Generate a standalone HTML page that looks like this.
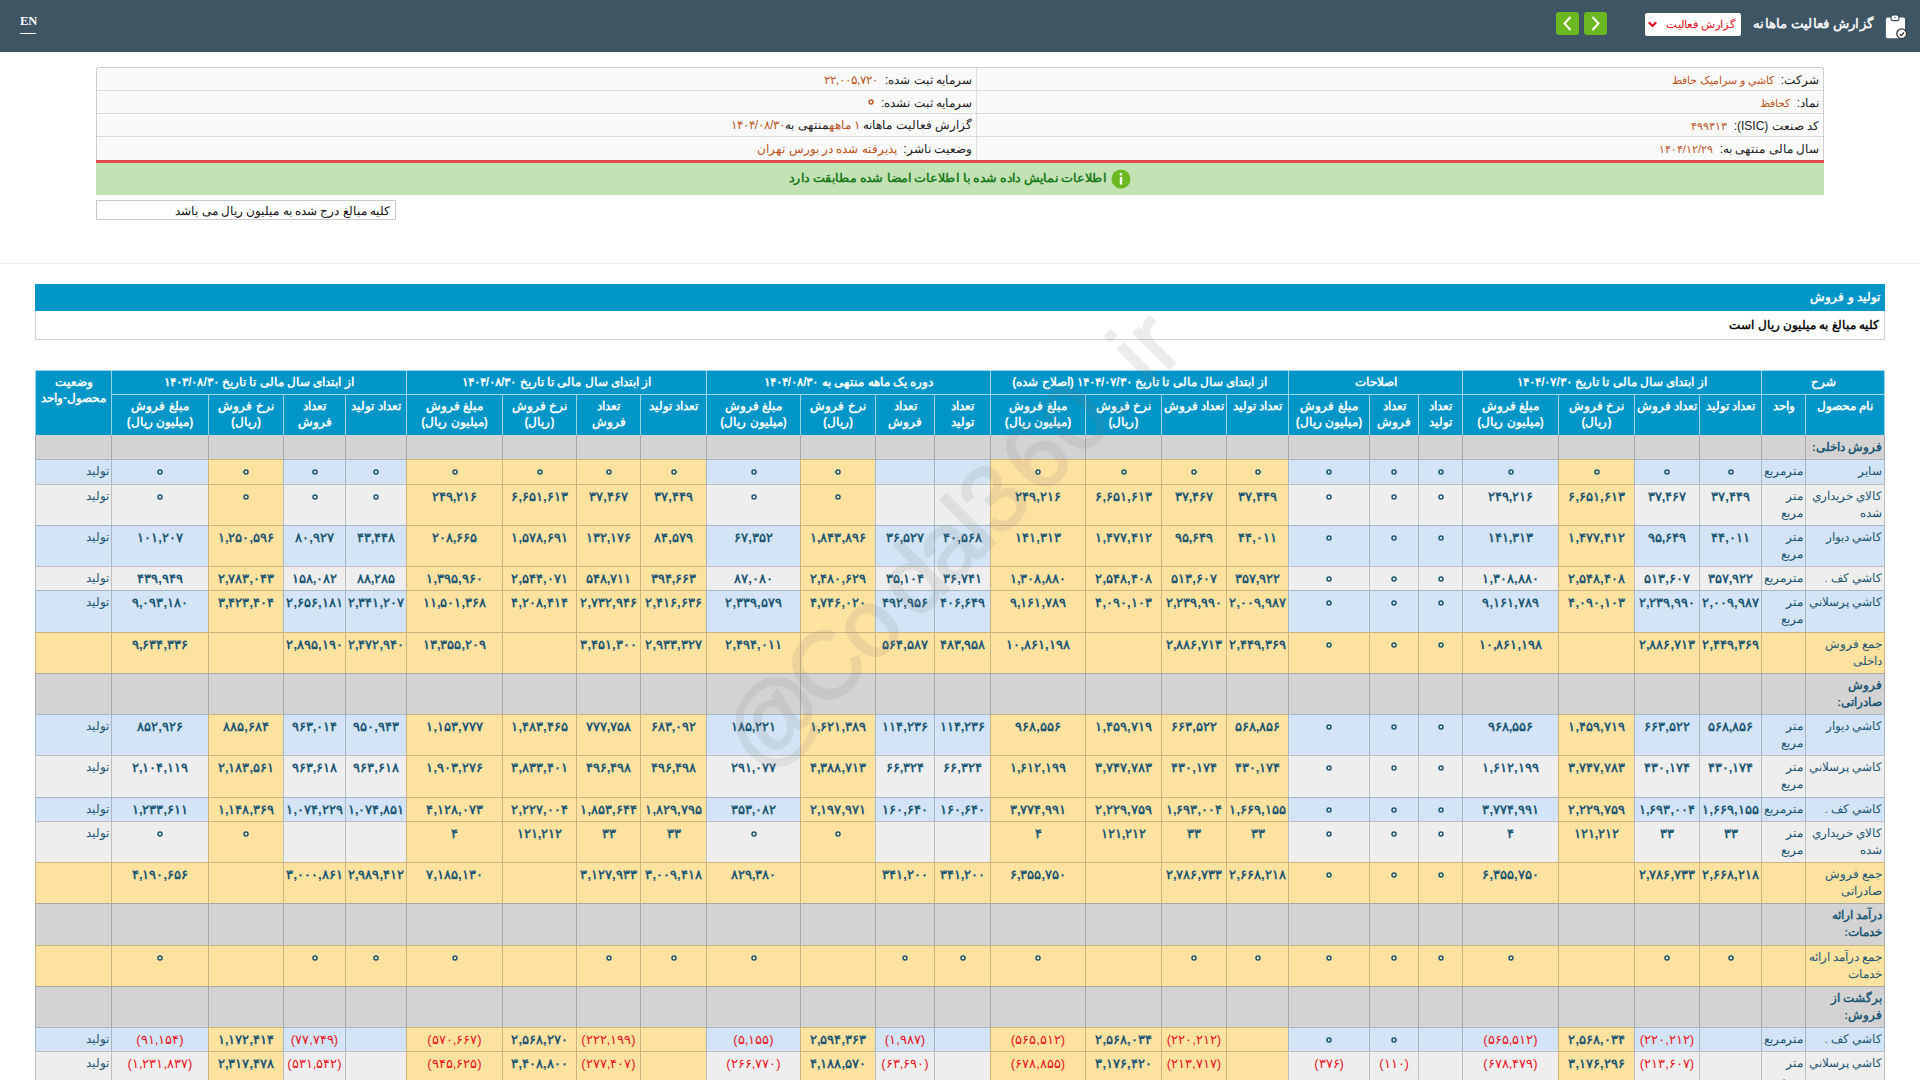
<!DOCTYPE html>
<html lang="fa"><head><meta charset="utf-8"><title>گزارش فعالیت ماهانه</title>
<style>
*{box-sizing:border-box;margin:0;padding:0}
html,body{width:1920px;height:1080px;overflow:hidden;background:#fff}
body{position:relative;font-family:"Liberation Sans",sans-serif;font-size:12px;color:#222}
.a{position:absolute}
.c{position:absolute;border-left:1px solid rgba(0,0,0,0.2);border-top:1px solid rgba(0,0,0,0.2);color:#1d5673;text-align:center;padding-top:3px;line-height:17px;white-space:nowrap;overflow:hidden;font-size:13px;font-weight:bold}
.rt{text-align:right;padding-right:2px;font-size:11.5px;font-weight:normal}
.c.b{font-weight:bold}
.h{position:absolute;border-left:1px solid #9fd3ea;border-top:1px solid #9fd3ea;color:#fff;text-align:center;font-weight:bold;line-height:16px;white-space:nowrap;overflow:hidden;font-size:12px;background:#0096c8}
.red{color:#e8141e;font-weight:normal !important}
.b{font-weight:bold}
</style></head><body dir="rtl">

<div class="a" style="left:0;top:0;width:1920px;height:52px;background:#3e5563"></div>
<div class="a" dir="ltr" style="left:20px;top:13px;width:16px;height:21px;font-family:'Liberation Serif',serif;font-weight:bold;font-size:12.5px;color:#fff;line-height:17px;border-bottom:1px solid #fff">EN</div>
<svg class="a" style="left:1880px;top:10px" width="32" height="32" viewBox="0 0 32 32">
<rect x="5.9" y="7.6" width="19.1" height="20.7" rx="1.6" fill="#fff"/>
<rect x="11" y="5" width="8" height="5.6" rx="2.2" fill="#fff" stroke="#3a4a55" stroke-width="1.1"/>
<path d="M14.2 8 L15 6.6 L15.8 8 z" fill="#333"/>
<circle cx="21.7" cy="23.7" r="4.9" fill="#fff" stroke="#333" stroke-width="1.3"/>
<path d="M19.9 24.2 L21.2 25.5 L24 22.6" fill="none" stroke="#333" stroke-width="1.4"/>
</svg>
<div class="a" style="left:1700px;top:12px;width:173px;height:24px;text-align:right;color:#f4f6f8;font-weight:bold;font-size:13px;line-height:24px;white-space:nowrap;transform:scaleX(1.03);transform-origin:right center">گزارش فعالیت ماهانه</div>
<div class="a" style="left:1645px;top:13px;width:96px;height:23px;background:#fff;border-radius:2px"></div>
<div class="a" style="left:1662px;top:13px;width:73px;height:23px;text-align:right;color:#e0141e;font-size:11px;line-height:22px;white-space:nowrap;transform:scaleX(1.06);transform-origin:right center">گزارش فعالیت</div>
<svg class="a" style="left:1647px;top:20px" width="11" height="9" viewBox="0 0 11 9"><path d="M1.8 2.2 L5.5 6 L9.2 2.2" fill="none" stroke="#e0141e" stroke-width="2.2"/></svg>
<div class="a" style="left:1556px;top:12px;width:23px;height:23px;background:#6cb823;border-radius:3px"></div>
<svg class="a" style="left:1556px;top:12px" width="23" height="23" viewBox="0 0 23 23"><path d="M14.5 5 L8.5 11.5 L14.5 18" fill="none" stroke="#fff" stroke-width="2"/></svg>
<div class="a" style="left:1584px;top:12px;width:23px;height:23px;background:#6cb823;border-radius:3px"></div>
<svg class="a" style="left:1584px;top:12px" width="23" height="23" viewBox="0 0 23 23"><path d="M8.5 5 L14.5 11.5 L8.5 18" fill="none" stroke="#fff" stroke-width="2"/></svg>
<div class="a" style="left:96px;top:67px;width:1728px;height:96px;background:#f9f9f9;border:1px solid #cfcfcf;border-bottom:none;border-radius:3px 3px 0 0"></div>
<div class="a" style="left:97px;top:90px;width:1726px;height:1px;background:#dcdcdc"></div>
<div class="a" style="left:97px;top:113px;width:1726px;height:1px;background:#dcdcdc"></div>
<div class="a" style="left:97px;top:136px;width:1726px;height:1px;background:#dcdcdc"></div>
<div class="a" style="left:976px;top:68px;width:1px;height:92px;background:#dcdcdc"></div>
<div class="a" style="left:96px;top:160px;width:1728px;height:3px;background:#e24c4c"></div>
<div class="a" style="left:96px;top:163px;width:1728px;height:32px;background:#c3e3b5"></div>
<div class="a" style="left:990px;top:67px;width:829px;height:23px;text-align:right;font-size:12px;line-height:26px;color:#222">شرکت:&nbsp; <span style="color:#b9561e;font-size:11px">کاشي و سرامیک حافظ</span></div>
<div class="a" style="left:990px;top:90px;width:829px;height:23px;text-align:right;font-size:12px;line-height:26px;color:#222">نماد:&nbsp; <span style="color:#b9561e;font-size:11px">کحافظ</span></div>
<div class="a" style="left:990px;top:113px;width:829px;height:23px;text-align:right;font-size:12px;line-height:26px;color:#222">کد صنعت (ISIC):&nbsp; <span style="color:#b9561e;font-size:11px">۴۹۹۳۱۳</span></div>
<div class="a" style="left:990px;top:136px;width:829px;height:23px;text-align:right;font-size:12px;line-height:26px;color:#222">سال مالی منتهی به:&nbsp; <span style="color:#b9561e;font-size:11px">۱۴۰۴/۱۲/۲۹</span></div>
<div class="a" style="left:110px;top:67px;width:862px;height:23px;text-align:right;font-size:12px;line-height:26px;color:#222">سرمایه ثبت شده:&nbsp; <span style="color:#b9561e">۲۲,۰۰۵,۷۲۰</span></div>
<div class="a" style="left:110px;top:90px;width:862px;height:23px;text-align:right;font-size:12px;line-height:26px;color:#222">سرمایه ثبت نشده:&nbsp; <span style="color:#b9561e"><svg width="6" height="6" viewBox="0 0 6 6" style="display:inline-block;vertical-align:middle;margin-top:-4px"><circle cx="3" cy="3" r="2" fill="none" stroke="#b9561e" stroke-width="1.4"/></svg></span></div>
<div class="a" style="left:110px;top:113px;width:862px;height:23px;text-align:right;font-size:12px;line-height:24px;color:#222">گزارش فعالیت ماهانه <span style="color:#b9561e">۱ ماهه</span>منتهی به<span style="color:#b9561e">۱۴۰۴/۰۸/۳۰</span></div>
<div class="a" style="left:110px;top:136px;width:862px;height:23px;text-align:right;font-size:12px;line-height:26px;color:#222">وضعیت ناشر:&nbsp; <span style="color:#b9561e">پذیرفته شده در بورس تهران</span></div>
<div class="a" style="left:600px;top:163px;width:506px;height:32px;text-align:right;color:#1d7a1d;font-weight:bold;font-size:12px;line-height:31px;white-space:nowrap;transform:scaleX(1.06);transform-origin:right center">اطلاعات نمایش داده شده با اطلاعات امضا شده مطابقت دارد</div>
<svg class="a" style="left:1111px;top:169px" width="20" height="20" viewBox="0 0 20 20"><circle cx="10" cy="10" r="9.5" fill="#6cb823"/><rect x="8.8" y="8" width="2.4" height="7.5" fill="#fff"/><circle cx="10" cy="5.3" r="1.3" fill="#fff"/></svg>
<div class="a" style="left:96px;top:200px;width:300px;height:20px;border:1px solid #c8c8c8;text-align:right;padding-right:5px;font-size:12px;line-height:20px;color:#111">کلیه مبالغ درج شده به میلیون ریال می باشد</div>
<div class="a" style="left:0;top:263px;width:1920px;height:1px;background:#ececec"></div>
<div class="a" style="left:35px;top:284px;width:1850px;height:27px;background:#0096c8;color:#fff;font-weight:bold;text-align:right;padding-right:5px;font-size:12px;line-height:27px">تولید و فروش</div>
<div class="a" style="left:35px;top:311px;width:1850px;height:29px;border:1px solid #d0d0d0;border-top:none;text-align:right;padding-right:5px;font-weight:bold;font-size:12px;line-height:28px;color:#111">کلیه مبالغ به میلیون ریال است</div>
<div class="h" style="left:1761px;top:370px;width:123px;height:24px;padding-top:3px">شرح</div>
<div class="h" style="left:1462px;top:370px;width:299px;height:24px;padding-top:3px">از ابتدای سال مالی تا تاریخ ۱۴۰۴/۰۷/۳۰</div>
<div class="h" style="left:1288px;top:370px;width:174px;height:24px;padding-top:3px">اصلاحات</div>
<div class="h" style="left:990px;top:370px;width:298px;height:24px;padding-top:3px">از ابتدای سال مالی تا تاریخ ۱۴۰۴/۰۷/۳۰ (اصلاح شده)</div>
<div class="h" style="left:706px;top:370px;width:284px;height:24px;padding-top:3px">دوره یک ماهه منتهی به ۱۴۰۴/۰۸/۳۰</div>
<div class="h" style="left:406px;top:370px;width:300px;height:24px;padding-top:3px">از ابتدای سال مالی تا تاریخ ۱۴۰۴/۰۸/۳۰</div>
<div class="h" style="left:111px;top:370px;width:295px;height:24px;padding-top:3px">از ابتدای سال مالی تا تاریخ ۱۴۰۳/۰۸/۳۰</div>
<div class="h" style="left:35px;top:370px;width:76px;height:65px;padding-top:3px">وضعیت<br>محصول-واحد</div>
<div class="h" style="left:1805px;top:394px;width:79px;height:41px;padding-top:3px">نام محصول</div>
<div class="h" style="left:1761px;top:394px;width:44px;height:41px;padding-top:3px">واحد</div>
<div class="h" style="left:1699px;top:394px;width:62px;height:41px;padding-top:3px">تعداد تولید</div>
<div class="h" style="left:1634px;top:394px;width:65px;height:41px;padding-top:3px">تعداد فروش</div>
<div class="h" style="left:1558px;top:394px;width:76px;height:41px;padding-top:3px">نرخ فروش<br>(ریال)</div>
<div class="h" style="left:1462px;top:394px;width:96px;height:41px;padding-top:3px">مبلغ فروش<br>(میلیون ریال)</div>
<div class="h" style="left:1418px;top:394px;width:44px;height:41px;padding-top:3px">تعداد<br>تولید</div>
<div class="h" style="left:1369px;top:394px;width:49px;height:41px;padding-top:3px">تعداد<br>فروش</div>
<div class="h" style="left:1288px;top:394px;width:81px;height:41px;padding-top:3px">مبلغ فروش<br>(میلیون ریال)</div>
<div class="h" style="left:1226px;top:394px;width:62px;height:41px;padding-top:3px">تعداد تولید</div>
<div class="h" style="left:1161px;top:394px;width:65px;height:41px;padding-top:3px">تعداد فروش</div>
<div class="h" style="left:1085px;top:394px;width:76px;height:41px;padding-top:3px">نرخ فروش<br>(ریال)</div>
<div class="h" style="left:990px;top:394px;width:95px;height:41px;padding-top:3px">مبلغ فروش<br>(میلیون ریال)</div>
<div class="h" style="left:934px;top:394px;width:56px;height:41px;padding-top:3px">تعداد<br>تولید</div>
<div class="h" style="left:875px;top:394px;width:59px;height:41px;padding-top:3px">تعداد<br>فروش</div>
<div class="h" style="left:800px;top:394px;width:75px;height:41px;padding-top:3px">نرخ فروش<br>(ریال)</div>
<div class="h" style="left:706px;top:394px;width:94px;height:41px;padding-top:3px">مبلغ فروش<br>(میلیون ریال)</div>
<div class="h" style="left:640px;top:394px;width:66px;height:41px;padding-top:3px">تعداد تولید</div>
<div class="h" style="left:576px;top:394px;width:64px;height:41px;padding-top:3px">تعداد<br>فروش</div>
<div class="h" style="left:502px;top:394px;width:74px;height:41px;padding-top:3px">نرخ فروش<br>(ریال)</div>
<div class="h" style="left:406px;top:394px;width:96px;height:41px;padding-top:3px">مبلغ فروش<br>(میلیون ریال)</div>
<div class="h" style="left:345px;top:394px;width:61px;height:41px;padding-top:3px">تعداد تولید</div>
<div class="h" style="left:283px;top:394px;width:62px;height:41px;padding-top:3px">تعداد<br>فروش</div>
<div class="h" style="left:208px;top:394px;width:75px;height:41px;padding-top:3px">نرخ فروش<br>(ریال)</div>
<div class="h" style="left:111px;top:394px;width:97px;height:41px;padding-top:3px">مبلغ فروش<br>(میلیون ریال)</div>
<div class="c rt b" style="left:1805px;top:435px;width:80px;height:24px;background:#d3d3d3;border-right:1px solid rgba(0,0,0,0.2);border-top:none;padding-top:4px">فروش داخلی:</div>
<div class="c rt" style="left:1761px;top:435px;width:44px;height:24px;background:#d3d3d3;border-top:none;padding-top:4px"></div>
<div class="c" style="left:1699px;top:435px;width:62px;height:24px;background:#d3d3d3;border-top:none;padding-top:4px"></div>
<div class="c" style="left:1634px;top:435px;width:65px;height:24px;background:#d3d3d3;border-top:none;padding-top:4px"></div>
<div class="c" style="left:1558px;top:435px;width:76px;height:24px;background:#d3d3d3;border-top:none;padding-top:4px"></div>
<div class="c" style="left:1462px;top:435px;width:96px;height:24px;background:#d3d3d3;border-top:none;padding-top:4px"></div>
<div class="c" style="left:1418px;top:435px;width:44px;height:24px;background:#d3d3d3;border-top:none;padding-top:4px"></div>
<div class="c" style="left:1369px;top:435px;width:49px;height:24px;background:#d3d3d3;border-top:none;padding-top:4px"></div>
<div class="c" style="left:1288px;top:435px;width:81px;height:24px;background:#d3d3d3;border-top:none;padding-top:4px"></div>
<div class="c" style="left:1226px;top:435px;width:62px;height:24px;background:#d3d3d3;border-top:none;padding-top:4px"></div>
<div class="c" style="left:1161px;top:435px;width:65px;height:24px;background:#d3d3d3;border-top:none;padding-top:4px"></div>
<div class="c" style="left:1085px;top:435px;width:76px;height:24px;background:#d3d3d3;border-top:none;padding-top:4px"></div>
<div class="c" style="left:990px;top:435px;width:95px;height:24px;background:#d3d3d3;border-top:none;padding-top:4px"></div>
<div class="c" style="left:934px;top:435px;width:56px;height:24px;background:#d3d3d3;border-top:none;padding-top:4px"></div>
<div class="c" style="left:875px;top:435px;width:59px;height:24px;background:#d3d3d3;border-top:none;padding-top:4px"></div>
<div class="c" style="left:800px;top:435px;width:75px;height:24px;background:#d3d3d3;border-top:none;padding-top:4px"></div>
<div class="c" style="left:706px;top:435px;width:94px;height:24px;background:#d3d3d3;border-top:none;padding-top:4px"></div>
<div class="c" style="left:640px;top:435px;width:66px;height:24px;background:#d3d3d3;border-top:none;padding-top:4px"></div>
<div class="c" style="left:576px;top:435px;width:64px;height:24px;background:#d3d3d3;border-top:none;padding-top:4px"></div>
<div class="c" style="left:502px;top:435px;width:74px;height:24px;background:#d3d3d3;border-top:none;padding-top:4px"></div>
<div class="c" style="left:406px;top:435px;width:96px;height:24px;background:#d3d3d3;border-top:none;padding-top:4px"></div>
<div class="c" style="left:345px;top:435px;width:61px;height:24px;background:#d3d3d3;border-top:none;padding-top:4px"></div>
<div class="c" style="left:283px;top:435px;width:62px;height:24px;background:#d3d3d3;border-top:none;padding-top:4px"></div>
<div class="c" style="left:208px;top:435px;width:75px;height:24px;background:#d3d3d3;border-top:none;padding-top:4px"></div>
<div class="c" style="left:111px;top:435px;width:97px;height:24px;background:#d3d3d3;border-top:none;padding-top:4px"></div>
<div class="c rt" style="left:35px;top:435px;width:76px;height:24px;background:#d3d3d3;border-top:none;padding-top:4px"></div>
<div class="c rt" style="left:1805px;top:459px;width:80px;height:25px;background:#d2e4f5;border-right:1px solid rgba(0,0,0,0.2)">سایر</div>
<div class="c rt" style="left:1761px;top:459px;width:44px;height:25px;background:#d2e4f5">مترمربع</div>
<div class="c" style="left:1699px;top:459px;width:62px;height:25px;background:#d2e4f5"><svg width="6" height="6" viewBox="0 0 6 6" style="display:inline-block;vertical-align:middle;margin-top:-2px"><circle cx="3" cy="3" r="2" fill="none" stroke="#1d5673" stroke-width="1.5"/></svg></div>
<div class="c" style="left:1634px;top:459px;width:65px;height:25px;background:#d2e4f5"><svg width="6" height="6" viewBox="0 0 6 6" style="display:inline-block;vertical-align:middle;margin-top:-2px"><circle cx="3" cy="3" r="2" fill="none" stroke="#1d5673" stroke-width="1.5"/></svg></div>
<div class="c" style="left:1558px;top:459px;width:76px;height:25px;background:#fee2a0"><svg width="6" height="6" viewBox="0 0 6 6" style="display:inline-block;vertical-align:middle;margin-top:-2px"><circle cx="3" cy="3" r="2" fill="none" stroke="#1d5673" stroke-width="1.5"/></svg></div>
<div class="c" style="left:1462px;top:459px;width:96px;height:25px;background:#d2e4f5"><svg width="6" height="6" viewBox="0 0 6 6" style="display:inline-block;vertical-align:middle;margin-top:-2px"><circle cx="3" cy="3" r="2" fill="none" stroke="#1d5673" stroke-width="1.5"/></svg></div>
<div class="c" style="left:1418px;top:459px;width:44px;height:25px;background:#d2e4f5"><svg width="6" height="6" viewBox="0 0 6 6" style="display:inline-block;vertical-align:middle;margin-top:-2px"><circle cx="3" cy="3" r="2" fill="none" stroke="#1d5673" stroke-width="1.5"/></svg></div>
<div class="c" style="left:1369px;top:459px;width:49px;height:25px;background:#d2e4f5"><svg width="6" height="6" viewBox="0 0 6 6" style="display:inline-block;vertical-align:middle;margin-top:-2px"><circle cx="3" cy="3" r="2" fill="none" stroke="#1d5673" stroke-width="1.5"/></svg></div>
<div class="c" style="left:1288px;top:459px;width:81px;height:25px;background:#d2e4f5"><svg width="6" height="6" viewBox="0 0 6 6" style="display:inline-block;vertical-align:middle;margin-top:-2px"><circle cx="3" cy="3" r="2" fill="none" stroke="#1d5673" stroke-width="1.5"/></svg></div>
<div class="c" style="left:1226px;top:459px;width:62px;height:25px;background:#fee2a0"><svg width="6" height="6" viewBox="0 0 6 6" style="display:inline-block;vertical-align:middle;margin-top:-2px"><circle cx="3" cy="3" r="2" fill="none" stroke="#1d5673" stroke-width="1.5"/></svg></div>
<div class="c" style="left:1161px;top:459px;width:65px;height:25px;background:#fee2a0"><svg width="6" height="6" viewBox="0 0 6 6" style="display:inline-block;vertical-align:middle;margin-top:-2px"><circle cx="3" cy="3" r="2" fill="none" stroke="#1d5673" stroke-width="1.5"/></svg></div>
<div class="c" style="left:1085px;top:459px;width:76px;height:25px;background:#fee2a0"><svg width="6" height="6" viewBox="0 0 6 6" style="display:inline-block;vertical-align:middle;margin-top:-2px"><circle cx="3" cy="3" r="2" fill="none" stroke="#1d5673" stroke-width="1.5"/></svg></div>
<div class="c" style="left:990px;top:459px;width:95px;height:25px;background:#fee2a0"><svg width="6" height="6" viewBox="0 0 6 6" style="display:inline-block;vertical-align:middle;margin-top:-2px"><circle cx="3" cy="3" r="2" fill="none" stroke="#1d5673" stroke-width="1.5"/></svg></div>
<div class="c" style="left:934px;top:459px;width:56px;height:25px;background:#d2e4f5"></div>
<div class="c" style="left:875px;top:459px;width:59px;height:25px;background:#d2e4f5"></div>
<div class="c" style="left:800px;top:459px;width:75px;height:25px;background:#fee2a0"><svg width="6" height="6" viewBox="0 0 6 6" style="display:inline-block;vertical-align:middle;margin-top:-2px"><circle cx="3" cy="3" r="2" fill="none" stroke="#1d5673" stroke-width="1.5"/></svg></div>
<div class="c" style="left:706px;top:459px;width:94px;height:25px;background:#d2e4f5"><svg width="6" height="6" viewBox="0 0 6 6" style="display:inline-block;vertical-align:middle;margin-top:-2px"><circle cx="3" cy="3" r="2" fill="none" stroke="#1d5673" stroke-width="1.5"/></svg></div>
<div class="c" style="left:640px;top:459px;width:66px;height:25px;background:#fee2a0"><svg width="6" height="6" viewBox="0 0 6 6" style="display:inline-block;vertical-align:middle;margin-top:-2px"><circle cx="3" cy="3" r="2" fill="none" stroke="#1d5673" stroke-width="1.5"/></svg></div>
<div class="c" style="left:576px;top:459px;width:64px;height:25px;background:#fee2a0"><svg width="6" height="6" viewBox="0 0 6 6" style="display:inline-block;vertical-align:middle;margin-top:-2px"><circle cx="3" cy="3" r="2" fill="none" stroke="#1d5673" stroke-width="1.5"/></svg></div>
<div class="c" style="left:502px;top:459px;width:74px;height:25px;background:#fee2a0"><svg width="6" height="6" viewBox="0 0 6 6" style="display:inline-block;vertical-align:middle;margin-top:-2px"><circle cx="3" cy="3" r="2" fill="none" stroke="#1d5673" stroke-width="1.5"/></svg></div>
<div class="c" style="left:406px;top:459px;width:96px;height:25px;background:#fee2a0"><svg width="6" height="6" viewBox="0 0 6 6" style="display:inline-block;vertical-align:middle;margin-top:-2px"><circle cx="3" cy="3" r="2" fill="none" stroke="#1d5673" stroke-width="1.5"/></svg></div>
<div class="c" style="left:345px;top:459px;width:61px;height:25px;background:#d2e4f5"><svg width="6" height="6" viewBox="0 0 6 6" style="display:inline-block;vertical-align:middle;margin-top:-2px"><circle cx="3" cy="3" r="2" fill="none" stroke="#1d5673" stroke-width="1.5"/></svg></div>
<div class="c" style="left:283px;top:459px;width:62px;height:25px;background:#d2e4f5"><svg width="6" height="6" viewBox="0 0 6 6" style="display:inline-block;vertical-align:middle;margin-top:-2px"><circle cx="3" cy="3" r="2" fill="none" stroke="#1d5673" stroke-width="1.5"/></svg></div>
<div class="c" style="left:208px;top:459px;width:75px;height:25px;background:#fee2a0"><svg width="6" height="6" viewBox="0 0 6 6" style="display:inline-block;vertical-align:middle;margin-top:-2px"><circle cx="3" cy="3" r="2" fill="none" stroke="#1d5673" stroke-width="1.5"/></svg></div>
<div class="c" style="left:111px;top:459px;width:97px;height:25px;background:#d2e4f5"><svg width="6" height="6" viewBox="0 0 6 6" style="display:inline-block;vertical-align:middle;margin-top:-2px"><circle cx="3" cy="3" r="2" fill="none" stroke="#1d5673" stroke-width="1.5"/></svg></div>
<div class="c rt" style="left:35px;top:459px;width:76px;height:25px;background:#d2e4f5">تولید</div>
<div class="c rt" style="left:1805px;top:484px;width:80px;height:41px;background:#eeeeee;border-right:1px solid rgba(0,0,0,0.2)">کالاي خريداري<br>شده</div>
<div class="c rt" style="left:1761px;top:484px;width:44px;height:41px;background:#eeeeee">متر<br>مربع</div>
<div class="c" style="left:1699px;top:484px;width:62px;height:41px;background:#eeeeee">۳۷,۴۴۹</div>
<div class="c" style="left:1634px;top:484px;width:65px;height:41px;background:#eeeeee">۳۷,۴۶۷</div>
<div class="c" style="left:1558px;top:484px;width:76px;height:41px;background:#fee2a0">۶,۶۵۱,۶۱۳</div>
<div class="c" style="left:1462px;top:484px;width:96px;height:41px;background:#eeeeee">۲۴۹,۲۱۶</div>
<div class="c" style="left:1418px;top:484px;width:44px;height:41px;background:#eeeeee"><svg width="6" height="6" viewBox="0 0 6 6" style="display:inline-block;vertical-align:middle;margin-top:-2px"><circle cx="3" cy="3" r="2" fill="none" stroke="#1d5673" stroke-width="1.5"/></svg></div>
<div class="c" style="left:1369px;top:484px;width:49px;height:41px;background:#eeeeee"><svg width="6" height="6" viewBox="0 0 6 6" style="display:inline-block;vertical-align:middle;margin-top:-2px"><circle cx="3" cy="3" r="2" fill="none" stroke="#1d5673" stroke-width="1.5"/></svg></div>
<div class="c" style="left:1288px;top:484px;width:81px;height:41px;background:#eeeeee"><svg width="6" height="6" viewBox="0 0 6 6" style="display:inline-block;vertical-align:middle;margin-top:-2px"><circle cx="3" cy="3" r="2" fill="none" stroke="#1d5673" stroke-width="1.5"/></svg></div>
<div class="c" style="left:1226px;top:484px;width:62px;height:41px;background:#fee2a0">۳۷,۴۴۹</div>
<div class="c" style="left:1161px;top:484px;width:65px;height:41px;background:#fee2a0">۳۷,۴۶۷</div>
<div class="c" style="left:1085px;top:484px;width:76px;height:41px;background:#fee2a0">۶,۶۵۱,۶۱۳</div>
<div class="c" style="left:990px;top:484px;width:95px;height:41px;background:#fee2a0">۲۴۹,۲۱۶</div>
<div class="c" style="left:934px;top:484px;width:56px;height:41px;background:#eeeeee"></div>
<div class="c" style="left:875px;top:484px;width:59px;height:41px;background:#eeeeee"></div>
<div class="c" style="left:800px;top:484px;width:75px;height:41px;background:#fee2a0"><svg width="6" height="6" viewBox="0 0 6 6" style="display:inline-block;vertical-align:middle;margin-top:-2px"><circle cx="3" cy="3" r="2" fill="none" stroke="#1d5673" stroke-width="1.5"/></svg></div>
<div class="c" style="left:706px;top:484px;width:94px;height:41px;background:#eeeeee"><svg width="6" height="6" viewBox="0 0 6 6" style="display:inline-block;vertical-align:middle;margin-top:-2px"><circle cx="3" cy="3" r="2" fill="none" stroke="#1d5673" stroke-width="1.5"/></svg></div>
<div class="c" style="left:640px;top:484px;width:66px;height:41px;background:#fee2a0">۳۷,۴۴۹</div>
<div class="c" style="left:576px;top:484px;width:64px;height:41px;background:#fee2a0">۳۷,۴۶۷</div>
<div class="c" style="left:502px;top:484px;width:74px;height:41px;background:#fee2a0">۶,۶۵۱,۶۱۳</div>
<div class="c" style="left:406px;top:484px;width:96px;height:41px;background:#fee2a0">۲۴۹,۲۱۶</div>
<div class="c" style="left:345px;top:484px;width:61px;height:41px;background:#eeeeee"><svg width="6" height="6" viewBox="0 0 6 6" style="display:inline-block;vertical-align:middle;margin-top:-2px"><circle cx="3" cy="3" r="2" fill="none" stroke="#1d5673" stroke-width="1.5"/></svg></div>
<div class="c" style="left:283px;top:484px;width:62px;height:41px;background:#eeeeee"><svg width="6" height="6" viewBox="0 0 6 6" style="display:inline-block;vertical-align:middle;margin-top:-2px"><circle cx="3" cy="3" r="2" fill="none" stroke="#1d5673" stroke-width="1.5"/></svg></div>
<div class="c" style="left:208px;top:484px;width:75px;height:41px;background:#fee2a0"><svg width="6" height="6" viewBox="0 0 6 6" style="display:inline-block;vertical-align:middle;margin-top:-2px"><circle cx="3" cy="3" r="2" fill="none" stroke="#1d5673" stroke-width="1.5"/></svg></div>
<div class="c" style="left:111px;top:484px;width:97px;height:41px;background:#eeeeee"><svg width="6" height="6" viewBox="0 0 6 6" style="display:inline-block;vertical-align:middle;margin-top:-2px"><circle cx="3" cy="3" r="2" fill="none" stroke="#1d5673" stroke-width="1.5"/></svg></div>
<div class="c rt" style="left:35px;top:484px;width:76px;height:41px;background:#eeeeee">تولید</div>
<div class="c rt" style="left:1805px;top:525px;width:80px;height:41px;background:#d2e4f5;border-right:1px solid rgba(0,0,0,0.2)">کاشي ديوار</div>
<div class="c rt" style="left:1761px;top:525px;width:44px;height:41px;background:#d2e4f5">متر<br>مربع</div>
<div class="c" style="left:1699px;top:525px;width:62px;height:41px;background:#d2e4f5">۴۴,۰۱۱</div>
<div class="c" style="left:1634px;top:525px;width:65px;height:41px;background:#d2e4f5">۹۵,۶۴۹</div>
<div class="c" style="left:1558px;top:525px;width:76px;height:41px;background:#fee2a0">۱,۴۷۷,۴۱۲</div>
<div class="c" style="left:1462px;top:525px;width:96px;height:41px;background:#d2e4f5">۱۴۱,۳۱۳</div>
<div class="c" style="left:1418px;top:525px;width:44px;height:41px;background:#d2e4f5"><svg width="6" height="6" viewBox="0 0 6 6" style="display:inline-block;vertical-align:middle;margin-top:-2px"><circle cx="3" cy="3" r="2" fill="none" stroke="#1d5673" stroke-width="1.5"/></svg></div>
<div class="c" style="left:1369px;top:525px;width:49px;height:41px;background:#d2e4f5"><svg width="6" height="6" viewBox="0 0 6 6" style="display:inline-block;vertical-align:middle;margin-top:-2px"><circle cx="3" cy="3" r="2" fill="none" stroke="#1d5673" stroke-width="1.5"/></svg></div>
<div class="c" style="left:1288px;top:525px;width:81px;height:41px;background:#d2e4f5"><svg width="6" height="6" viewBox="0 0 6 6" style="display:inline-block;vertical-align:middle;margin-top:-2px"><circle cx="3" cy="3" r="2" fill="none" stroke="#1d5673" stroke-width="1.5"/></svg></div>
<div class="c" style="left:1226px;top:525px;width:62px;height:41px;background:#fee2a0">۴۴,۰۱۱</div>
<div class="c" style="left:1161px;top:525px;width:65px;height:41px;background:#fee2a0">۹۵,۶۴۹</div>
<div class="c" style="left:1085px;top:525px;width:76px;height:41px;background:#fee2a0">۱,۴۷۷,۴۱۲</div>
<div class="c" style="left:990px;top:525px;width:95px;height:41px;background:#fee2a0">۱۴۱,۳۱۳</div>
<div class="c" style="left:934px;top:525px;width:56px;height:41px;background:#d2e4f5">۴۰,۵۶۸</div>
<div class="c" style="left:875px;top:525px;width:59px;height:41px;background:#d2e4f5">۳۶,۵۲۷</div>
<div class="c" style="left:800px;top:525px;width:75px;height:41px;background:#fee2a0">۱,۸۴۳,۸۹۶</div>
<div class="c" style="left:706px;top:525px;width:94px;height:41px;background:#d2e4f5">۶۷,۳۵۲</div>
<div class="c" style="left:640px;top:525px;width:66px;height:41px;background:#fee2a0">۸۴,۵۷۹</div>
<div class="c" style="left:576px;top:525px;width:64px;height:41px;background:#fee2a0">۱۳۲,۱۷۶</div>
<div class="c" style="left:502px;top:525px;width:74px;height:41px;background:#fee2a0">۱,۵۷۸,۶۹۱</div>
<div class="c" style="left:406px;top:525px;width:96px;height:41px;background:#fee2a0">۲۰۸,۶۶۵</div>
<div class="c" style="left:345px;top:525px;width:61px;height:41px;background:#d2e4f5">۴۳,۴۴۸</div>
<div class="c" style="left:283px;top:525px;width:62px;height:41px;background:#d2e4f5">۸۰,۹۲۷</div>
<div class="c" style="left:208px;top:525px;width:75px;height:41px;background:#fee2a0">۱,۲۵۰,۵۹۶</div>
<div class="c" style="left:111px;top:525px;width:97px;height:41px;background:#d2e4f5">۱۰۱,۲۰۷</div>
<div class="c rt" style="left:35px;top:525px;width:76px;height:41px;background:#d2e4f5">تولید</div>
<div class="c rt" style="left:1805px;top:566px;width:80px;height:24px;background:#eeeeee;border-right:1px solid rgba(0,0,0,0.2)">کاشي کف .</div>
<div class="c rt" style="left:1761px;top:566px;width:44px;height:24px;background:#eeeeee">مترمربع</div>
<div class="c" style="left:1699px;top:566px;width:62px;height:24px;background:#eeeeee">۳۵۷,۹۲۲</div>
<div class="c" style="left:1634px;top:566px;width:65px;height:24px;background:#eeeeee">۵۱۳,۶۰۷</div>
<div class="c" style="left:1558px;top:566px;width:76px;height:24px;background:#fee2a0">۲,۵۴۸,۴۰۸</div>
<div class="c" style="left:1462px;top:566px;width:96px;height:24px;background:#eeeeee">۱,۳۰۸,۸۸۰</div>
<div class="c" style="left:1418px;top:566px;width:44px;height:24px;background:#eeeeee"><svg width="6" height="6" viewBox="0 0 6 6" style="display:inline-block;vertical-align:middle;margin-top:-2px"><circle cx="3" cy="3" r="2" fill="none" stroke="#1d5673" stroke-width="1.5"/></svg></div>
<div class="c" style="left:1369px;top:566px;width:49px;height:24px;background:#eeeeee"><svg width="6" height="6" viewBox="0 0 6 6" style="display:inline-block;vertical-align:middle;margin-top:-2px"><circle cx="3" cy="3" r="2" fill="none" stroke="#1d5673" stroke-width="1.5"/></svg></div>
<div class="c" style="left:1288px;top:566px;width:81px;height:24px;background:#eeeeee"><svg width="6" height="6" viewBox="0 0 6 6" style="display:inline-block;vertical-align:middle;margin-top:-2px"><circle cx="3" cy="3" r="2" fill="none" stroke="#1d5673" stroke-width="1.5"/></svg></div>
<div class="c" style="left:1226px;top:566px;width:62px;height:24px;background:#fee2a0">۳۵۷,۹۲۲</div>
<div class="c" style="left:1161px;top:566px;width:65px;height:24px;background:#fee2a0">۵۱۳,۶۰۷</div>
<div class="c" style="left:1085px;top:566px;width:76px;height:24px;background:#fee2a0">۲,۵۴۸,۴۰۸</div>
<div class="c" style="left:990px;top:566px;width:95px;height:24px;background:#fee2a0">۱,۳۰۸,۸۸۰</div>
<div class="c" style="left:934px;top:566px;width:56px;height:24px;background:#eeeeee">۳۶,۷۴۱</div>
<div class="c" style="left:875px;top:566px;width:59px;height:24px;background:#eeeeee">۳۵,۱۰۴</div>
<div class="c" style="left:800px;top:566px;width:75px;height:24px;background:#fee2a0">۲,۴۸۰,۶۲۹</div>
<div class="c" style="left:706px;top:566px;width:94px;height:24px;background:#eeeeee">۸۷,۰۸۰</div>
<div class="c" style="left:640px;top:566px;width:66px;height:24px;background:#fee2a0">۳۹۴,۶۶۳</div>
<div class="c" style="left:576px;top:566px;width:64px;height:24px;background:#fee2a0">۵۴۸,۷۱۱</div>
<div class="c" style="left:502px;top:566px;width:74px;height:24px;background:#fee2a0">۲,۵۴۴,۰۷۱</div>
<div class="c" style="left:406px;top:566px;width:96px;height:24px;background:#fee2a0">۱,۳۹۵,۹۶۰</div>
<div class="c" style="left:345px;top:566px;width:61px;height:24px;background:#eeeeee">۸۸,۲۸۵</div>
<div class="c" style="left:283px;top:566px;width:62px;height:24px;background:#eeeeee">۱۵۸,۰۸۲</div>
<div class="c" style="left:208px;top:566px;width:75px;height:24px;background:#fee2a0">۲,۷۸۳,۰۴۳</div>
<div class="c" style="left:111px;top:566px;width:97px;height:24px;background:#eeeeee">۴۳۹,۹۴۹</div>
<div class="c rt" style="left:35px;top:566px;width:76px;height:24px;background:#eeeeee">تولید</div>
<div class="c rt" style="left:1805px;top:590px;width:80px;height:42px;background:#d2e4f5;border-right:1px solid rgba(0,0,0,0.2)">کاشي پرسلاني</div>
<div class="c rt" style="left:1761px;top:590px;width:44px;height:42px;background:#d2e4f5">متر<br>مربع</div>
<div class="c" style="left:1699px;top:590px;width:62px;height:42px;background:#d2e4f5">۲,۰۰۹,۹۸۷</div>
<div class="c" style="left:1634px;top:590px;width:65px;height:42px;background:#d2e4f5">۲,۲۳۹,۹۹۰</div>
<div class="c" style="left:1558px;top:590px;width:76px;height:42px;background:#fee2a0">۴,۰۹۰,۱۰۳</div>
<div class="c" style="left:1462px;top:590px;width:96px;height:42px;background:#d2e4f5">۹,۱۶۱,۷۸۹</div>
<div class="c" style="left:1418px;top:590px;width:44px;height:42px;background:#d2e4f5"><svg width="6" height="6" viewBox="0 0 6 6" style="display:inline-block;vertical-align:middle;margin-top:-2px"><circle cx="3" cy="3" r="2" fill="none" stroke="#1d5673" stroke-width="1.5"/></svg></div>
<div class="c" style="left:1369px;top:590px;width:49px;height:42px;background:#d2e4f5"><svg width="6" height="6" viewBox="0 0 6 6" style="display:inline-block;vertical-align:middle;margin-top:-2px"><circle cx="3" cy="3" r="2" fill="none" stroke="#1d5673" stroke-width="1.5"/></svg></div>
<div class="c" style="left:1288px;top:590px;width:81px;height:42px;background:#d2e4f5"><svg width="6" height="6" viewBox="0 0 6 6" style="display:inline-block;vertical-align:middle;margin-top:-2px"><circle cx="3" cy="3" r="2" fill="none" stroke="#1d5673" stroke-width="1.5"/></svg></div>
<div class="c" style="left:1226px;top:590px;width:62px;height:42px;background:#fee2a0">۲,۰۰۹,۹۸۷</div>
<div class="c" style="left:1161px;top:590px;width:65px;height:42px;background:#fee2a0">۲,۲۳۹,۹۹۰</div>
<div class="c" style="left:1085px;top:590px;width:76px;height:42px;background:#fee2a0">۴,۰۹۰,۱۰۳</div>
<div class="c" style="left:990px;top:590px;width:95px;height:42px;background:#fee2a0">۹,۱۶۱,۷۸۹</div>
<div class="c" style="left:934px;top:590px;width:56px;height:42px;background:#d2e4f5">۴۰۶,۶۴۹</div>
<div class="c" style="left:875px;top:590px;width:59px;height:42px;background:#d2e4f5">۴۹۲,۹۵۶</div>
<div class="c" style="left:800px;top:590px;width:75px;height:42px;background:#fee2a0">۴,۷۴۶,۰۲۰</div>
<div class="c" style="left:706px;top:590px;width:94px;height:42px;background:#d2e4f5">۲,۳۳۹,۵۷۹</div>
<div class="c" style="left:640px;top:590px;width:66px;height:42px;background:#fee2a0">۲,۴۱۶,۶۳۶</div>
<div class="c" style="left:576px;top:590px;width:64px;height:42px;background:#fee2a0">۲,۷۳۲,۹۴۶</div>
<div class="c" style="left:502px;top:590px;width:74px;height:42px;background:#fee2a0">۴,۲۰۸,۴۱۴</div>
<div class="c" style="left:406px;top:590px;width:96px;height:42px;background:#fee2a0">۱۱,۵۰۱,۳۶۸</div>
<div class="c" style="left:345px;top:590px;width:61px;height:42px;background:#d2e4f5">۲,۳۴۱,۲۰۷</div>
<div class="c" style="left:283px;top:590px;width:62px;height:42px;background:#d2e4f5">۲,۶۵۶,۱۸۱</div>
<div class="c" style="left:208px;top:590px;width:75px;height:42px;background:#fee2a0">۳,۴۲۳,۴۰۴</div>
<div class="c" style="left:111px;top:590px;width:97px;height:42px;background:#d2e4f5">۹,۰۹۳,۱۸۰</div>
<div class="c rt" style="left:35px;top:590px;width:76px;height:42px;background:#d2e4f5">تولید</div>
<div class="c rt" style="left:1805px;top:632px;width:80px;height:41px;background:#fee2a0;border-right:1px solid rgba(0,0,0,0.2)">جمع فروش<br>داخلی</div>
<div class="c rt" style="left:1761px;top:632px;width:44px;height:41px;background:#fee2a0"></div>
<div class="c" style="left:1699px;top:632px;width:62px;height:41px;background:#fee2a0">۲,۴۴۹,۳۶۹</div>
<div class="c" style="left:1634px;top:632px;width:65px;height:41px;background:#fee2a0">۲,۸۸۶,۷۱۳</div>
<div class="c" style="left:1558px;top:632px;width:76px;height:41px;background:#fee2a0"></div>
<div class="c" style="left:1462px;top:632px;width:96px;height:41px;background:#fee2a0">۱۰,۸۶۱,۱۹۸</div>
<div class="c" style="left:1418px;top:632px;width:44px;height:41px;background:#fee2a0"><svg width="6" height="6" viewBox="0 0 6 6" style="display:inline-block;vertical-align:middle;margin-top:-2px"><circle cx="3" cy="3" r="2" fill="none" stroke="#1d5673" stroke-width="1.5"/></svg></div>
<div class="c" style="left:1369px;top:632px;width:49px;height:41px;background:#fee2a0"><svg width="6" height="6" viewBox="0 0 6 6" style="display:inline-block;vertical-align:middle;margin-top:-2px"><circle cx="3" cy="3" r="2" fill="none" stroke="#1d5673" stroke-width="1.5"/></svg></div>
<div class="c" style="left:1288px;top:632px;width:81px;height:41px;background:#fee2a0"><svg width="6" height="6" viewBox="0 0 6 6" style="display:inline-block;vertical-align:middle;margin-top:-2px"><circle cx="3" cy="3" r="2" fill="none" stroke="#1d5673" stroke-width="1.5"/></svg></div>
<div class="c" style="left:1226px;top:632px;width:62px;height:41px;background:#fee2a0">۲,۴۴۹,۳۶۹</div>
<div class="c" style="left:1161px;top:632px;width:65px;height:41px;background:#fee2a0">۲,۸۸۶,۷۱۳</div>
<div class="c" style="left:1085px;top:632px;width:76px;height:41px;background:#fee2a0"></div>
<div class="c" style="left:990px;top:632px;width:95px;height:41px;background:#fee2a0">۱۰,۸۶۱,۱۹۸</div>
<div class="c" style="left:934px;top:632px;width:56px;height:41px;background:#fee2a0">۴۸۳,۹۵۸</div>
<div class="c" style="left:875px;top:632px;width:59px;height:41px;background:#fee2a0">۵۶۴,۵۸۷</div>
<div class="c" style="left:800px;top:632px;width:75px;height:41px;background:#fee2a0"></div>
<div class="c" style="left:706px;top:632px;width:94px;height:41px;background:#fee2a0">۲,۴۹۴,۰۱۱</div>
<div class="c" style="left:640px;top:632px;width:66px;height:41px;background:#fee2a0">۲,۹۳۳,۳۲۷</div>
<div class="c" style="left:576px;top:632px;width:64px;height:41px;background:#fee2a0">۳,۴۵۱,۳۰۰</div>
<div class="c" style="left:502px;top:632px;width:74px;height:41px;background:#fee2a0"></div>
<div class="c" style="left:406px;top:632px;width:96px;height:41px;background:#fee2a0">۱۳,۳۵۵,۲۰۹</div>
<div class="c" style="left:345px;top:632px;width:61px;height:41px;background:#fee2a0">۲,۴۷۲,۹۴۰</div>
<div class="c" style="left:283px;top:632px;width:62px;height:41px;background:#fee2a0">۲,۸۹۵,۱۹۰</div>
<div class="c" style="left:208px;top:632px;width:75px;height:41px;background:#fee2a0"></div>
<div class="c" style="left:111px;top:632px;width:97px;height:41px;background:#fee2a0">۹,۶۳۴,۳۳۶</div>
<div class="c rt" style="left:35px;top:632px;width:76px;height:41px;background:#fee2a0"></div>
<div class="c rt b" style="left:1805px;top:673px;width:80px;height:41px;background:#d3d3d3;border-right:1px solid rgba(0,0,0,0.2)">فروش<br>صادراتی:</div>
<div class="c rt" style="left:1761px;top:673px;width:44px;height:41px;background:#d3d3d3"></div>
<div class="c" style="left:1699px;top:673px;width:62px;height:41px;background:#d3d3d3"></div>
<div class="c" style="left:1634px;top:673px;width:65px;height:41px;background:#d3d3d3"></div>
<div class="c" style="left:1558px;top:673px;width:76px;height:41px;background:#d3d3d3"></div>
<div class="c" style="left:1462px;top:673px;width:96px;height:41px;background:#d3d3d3"></div>
<div class="c" style="left:1418px;top:673px;width:44px;height:41px;background:#d3d3d3"></div>
<div class="c" style="left:1369px;top:673px;width:49px;height:41px;background:#d3d3d3"></div>
<div class="c" style="left:1288px;top:673px;width:81px;height:41px;background:#d3d3d3"></div>
<div class="c" style="left:1226px;top:673px;width:62px;height:41px;background:#d3d3d3"></div>
<div class="c" style="left:1161px;top:673px;width:65px;height:41px;background:#d3d3d3"></div>
<div class="c" style="left:1085px;top:673px;width:76px;height:41px;background:#d3d3d3"></div>
<div class="c" style="left:990px;top:673px;width:95px;height:41px;background:#d3d3d3"></div>
<div class="c" style="left:934px;top:673px;width:56px;height:41px;background:#d3d3d3"></div>
<div class="c" style="left:875px;top:673px;width:59px;height:41px;background:#d3d3d3"></div>
<div class="c" style="left:800px;top:673px;width:75px;height:41px;background:#d3d3d3"></div>
<div class="c" style="left:706px;top:673px;width:94px;height:41px;background:#d3d3d3"></div>
<div class="c" style="left:640px;top:673px;width:66px;height:41px;background:#d3d3d3"></div>
<div class="c" style="left:576px;top:673px;width:64px;height:41px;background:#d3d3d3"></div>
<div class="c" style="left:502px;top:673px;width:74px;height:41px;background:#d3d3d3"></div>
<div class="c" style="left:406px;top:673px;width:96px;height:41px;background:#d3d3d3"></div>
<div class="c" style="left:345px;top:673px;width:61px;height:41px;background:#d3d3d3"></div>
<div class="c" style="left:283px;top:673px;width:62px;height:41px;background:#d3d3d3"></div>
<div class="c" style="left:208px;top:673px;width:75px;height:41px;background:#d3d3d3"></div>
<div class="c" style="left:111px;top:673px;width:97px;height:41px;background:#d3d3d3"></div>
<div class="c rt" style="left:35px;top:673px;width:76px;height:41px;background:#d3d3d3"></div>
<div class="c rt" style="left:1805px;top:714px;width:80px;height:41px;background:#d2e4f5;border-right:1px solid rgba(0,0,0,0.2)">کاشي ديوار</div>
<div class="c rt" style="left:1761px;top:714px;width:44px;height:41px;background:#d2e4f5">متر<br>مربع</div>
<div class="c" style="left:1699px;top:714px;width:62px;height:41px;background:#d2e4f5">۵۶۸,۸۵۶</div>
<div class="c" style="left:1634px;top:714px;width:65px;height:41px;background:#d2e4f5">۶۶۳,۵۲۲</div>
<div class="c" style="left:1558px;top:714px;width:76px;height:41px;background:#fee2a0">۱,۴۵۹,۷۱۹</div>
<div class="c" style="left:1462px;top:714px;width:96px;height:41px;background:#d2e4f5">۹۶۸,۵۵۶</div>
<div class="c" style="left:1418px;top:714px;width:44px;height:41px;background:#d2e4f5"><svg width="6" height="6" viewBox="0 0 6 6" style="display:inline-block;vertical-align:middle;margin-top:-2px"><circle cx="3" cy="3" r="2" fill="none" stroke="#1d5673" stroke-width="1.5"/></svg></div>
<div class="c" style="left:1369px;top:714px;width:49px;height:41px;background:#d2e4f5"><svg width="6" height="6" viewBox="0 0 6 6" style="display:inline-block;vertical-align:middle;margin-top:-2px"><circle cx="3" cy="3" r="2" fill="none" stroke="#1d5673" stroke-width="1.5"/></svg></div>
<div class="c" style="left:1288px;top:714px;width:81px;height:41px;background:#d2e4f5"><svg width="6" height="6" viewBox="0 0 6 6" style="display:inline-block;vertical-align:middle;margin-top:-2px"><circle cx="3" cy="3" r="2" fill="none" stroke="#1d5673" stroke-width="1.5"/></svg></div>
<div class="c" style="left:1226px;top:714px;width:62px;height:41px;background:#fee2a0">۵۶۸,۸۵۶</div>
<div class="c" style="left:1161px;top:714px;width:65px;height:41px;background:#fee2a0">۶۶۳,۵۲۲</div>
<div class="c" style="left:1085px;top:714px;width:76px;height:41px;background:#fee2a0">۱,۴۵۹,۷۱۹</div>
<div class="c" style="left:990px;top:714px;width:95px;height:41px;background:#fee2a0">۹۶۸,۵۵۶</div>
<div class="c" style="left:934px;top:714px;width:56px;height:41px;background:#d2e4f5">۱۱۴,۲۳۶</div>
<div class="c" style="left:875px;top:714px;width:59px;height:41px;background:#d2e4f5">۱۱۴,۲۳۶</div>
<div class="c" style="left:800px;top:714px;width:75px;height:41px;background:#fee2a0">۱,۶۲۱,۳۸۹</div>
<div class="c" style="left:706px;top:714px;width:94px;height:41px;background:#d2e4f5">۱۸۵,۲۲۱</div>
<div class="c" style="left:640px;top:714px;width:66px;height:41px;background:#fee2a0">۶۸۳,۰۹۲</div>
<div class="c" style="left:576px;top:714px;width:64px;height:41px;background:#fee2a0">۷۷۷,۷۵۸</div>
<div class="c" style="left:502px;top:714px;width:74px;height:41px;background:#fee2a0">۱,۴۸۳,۴۶۵</div>
<div class="c" style="left:406px;top:714px;width:96px;height:41px;background:#fee2a0">۱,۱۵۳,۷۷۷</div>
<div class="c" style="left:345px;top:714px;width:61px;height:41px;background:#d2e4f5">۹۵۰,۹۴۳</div>
<div class="c" style="left:283px;top:714px;width:62px;height:41px;background:#d2e4f5">۹۶۳,۰۱۴</div>
<div class="c" style="left:208px;top:714px;width:75px;height:41px;background:#fee2a0">۸۸۵,۶۸۴</div>
<div class="c" style="left:111px;top:714px;width:97px;height:41px;background:#d2e4f5">۸۵۲,۹۲۶</div>
<div class="c rt" style="left:35px;top:714px;width:76px;height:41px;background:#d2e4f5">تولید</div>
<div class="c rt" style="left:1805px;top:755px;width:80px;height:42px;background:#eeeeee;border-right:1px solid rgba(0,0,0,0.2)">کاشي پرسلاني</div>
<div class="c rt" style="left:1761px;top:755px;width:44px;height:42px;background:#eeeeee">متر<br>مربع</div>
<div class="c" style="left:1699px;top:755px;width:62px;height:42px;background:#eeeeee">۴۳۰,۱۷۴</div>
<div class="c" style="left:1634px;top:755px;width:65px;height:42px;background:#eeeeee">۴۳۰,۱۷۴</div>
<div class="c" style="left:1558px;top:755px;width:76px;height:42px;background:#fee2a0">۳,۷۴۷,۷۸۳</div>
<div class="c" style="left:1462px;top:755px;width:96px;height:42px;background:#eeeeee">۱,۶۱۲,۱۹۹</div>
<div class="c" style="left:1418px;top:755px;width:44px;height:42px;background:#eeeeee"><svg width="6" height="6" viewBox="0 0 6 6" style="display:inline-block;vertical-align:middle;margin-top:-2px"><circle cx="3" cy="3" r="2" fill="none" stroke="#1d5673" stroke-width="1.5"/></svg></div>
<div class="c" style="left:1369px;top:755px;width:49px;height:42px;background:#eeeeee"><svg width="6" height="6" viewBox="0 0 6 6" style="display:inline-block;vertical-align:middle;margin-top:-2px"><circle cx="3" cy="3" r="2" fill="none" stroke="#1d5673" stroke-width="1.5"/></svg></div>
<div class="c" style="left:1288px;top:755px;width:81px;height:42px;background:#eeeeee"><svg width="6" height="6" viewBox="0 0 6 6" style="display:inline-block;vertical-align:middle;margin-top:-2px"><circle cx="3" cy="3" r="2" fill="none" stroke="#1d5673" stroke-width="1.5"/></svg></div>
<div class="c" style="left:1226px;top:755px;width:62px;height:42px;background:#fee2a0">۴۳۰,۱۷۴</div>
<div class="c" style="left:1161px;top:755px;width:65px;height:42px;background:#fee2a0">۴۳۰,۱۷۴</div>
<div class="c" style="left:1085px;top:755px;width:76px;height:42px;background:#fee2a0">۳,۷۴۷,۷۸۳</div>
<div class="c" style="left:990px;top:755px;width:95px;height:42px;background:#fee2a0">۱,۶۱۲,۱۹۹</div>
<div class="c" style="left:934px;top:755px;width:56px;height:42px;background:#eeeeee">۶۶,۳۲۴</div>
<div class="c" style="left:875px;top:755px;width:59px;height:42px;background:#eeeeee">۶۶,۳۲۴</div>
<div class="c" style="left:800px;top:755px;width:75px;height:42px;background:#fee2a0">۴,۳۸۸,۷۱۳</div>
<div class="c" style="left:706px;top:755px;width:94px;height:42px;background:#eeeeee">۲۹۱,۰۷۷</div>
<div class="c" style="left:640px;top:755px;width:66px;height:42px;background:#fee2a0">۴۹۶,۴۹۸</div>
<div class="c" style="left:576px;top:755px;width:64px;height:42px;background:#fee2a0">۴۹۶,۴۹۸</div>
<div class="c" style="left:502px;top:755px;width:74px;height:42px;background:#fee2a0">۳,۸۳۳,۴۰۱</div>
<div class="c" style="left:406px;top:755px;width:96px;height:42px;background:#fee2a0">۱,۹۰۳,۲۷۶</div>
<div class="c" style="left:345px;top:755px;width:61px;height:42px;background:#eeeeee">۹۶۳,۶۱۸</div>
<div class="c" style="left:283px;top:755px;width:62px;height:42px;background:#eeeeee">۹۶۳,۶۱۸</div>
<div class="c" style="left:208px;top:755px;width:75px;height:42px;background:#fee2a0">۲,۱۸۳,۵۶۱</div>
<div class="c" style="left:111px;top:755px;width:97px;height:42px;background:#eeeeee">۲,۱۰۴,۱۱۹</div>
<div class="c rt" style="left:35px;top:755px;width:76px;height:42px;background:#eeeeee">تولید</div>
<div class="c rt" style="left:1805px;top:797px;width:80px;height:24px;background:#d2e4f5;border-right:1px solid rgba(0,0,0,0.2)">کاشي کف .</div>
<div class="c rt" style="left:1761px;top:797px;width:44px;height:24px;background:#d2e4f5">مترمربع</div>
<div class="c" style="left:1699px;top:797px;width:62px;height:24px;background:#d2e4f5">۱,۶۶۹,۱۵۵</div>
<div class="c" style="left:1634px;top:797px;width:65px;height:24px;background:#d2e4f5">۱,۶۹۳,۰۰۴</div>
<div class="c" style="left:1558px;top:797px;width:76px;height:24px;background:#fee2a0">۲,۲۲۹,۷۵۹</div>
<div class="c" style="left:1462px;top:797px;width:96px;height:24px;background:#d2e4f5">۳,۷۷۴,۹۹۱</div>
<div class="c" style="left:1418px;top:797px;width:44px;height:24px;background:#d2e4f5"><svg width="6" height="6" viewBox="0 0 6 6" style="display:inline-block;vertical-align:middle;margin-top:-2px"><circle cx="3" cy="3" r="2" fill="none" stroke="#1d5673" stroke-width="1.5"/></svg></div>
<div class="c" style="left:1369px;top:797px;width:49px;height:24px;background:#d2e4f5"><svg width="6" height="6" viewBox="0 0 6 6" style="display:inline-block;vertical-align:middle;margin-top:-2px"><circle cx="3" cy="3" r="2" fill="none" stroke="#1d5673" stroke-width="1.5"/></svg></div>
<div class="c" style="left:1288px;top:797px;width:81px;height:24px;background:#d2e4f5"><svg width="6" height="6" viewBox="0 0 6 6" style="display:inline-block;vertical-align:middle;margin-top:-2px"><circle cx="3" cy="3" r="2" fill="none" stroke="#1d5673" stroke-width="1.5"/></svg></div>
<div class="c" style="left:1226px;top:797px;width:62px;height:24px;background:#fee2a0">۱,۶۶۹,۱۵۵</div>
<div class="c" style="left:1161px;top:797px;width:65px;height:24px;background:#fee2a0">۱,۶۹۳,۰۰۴</div>
<div class="c" style="left:1085px;top:797px;width:76px;height:24px;background:#fee2a0">۲,۲۲۹,۷۵۹</div>
<div class="c" style="left:990px;top:797px;width:95px;height:24px;background:#fee2a0">۳,۷۷۴,۹۹۱</div>
<div class="c" style="left:934px;top:797px;width:56px;height:24px;background:#d2e4f5">۱۶۰,۶۴۰</div>
<div class="c" style="left:875px;top:797px;width:59px;height:24px;background:#d2e4f5">۱۶۰,۶۴۰</div>
<div class="c" style="left:800px;top:797px;width:75px;height:24px;background:#fee2a0">۲,۱۹۷,۹۷۱</div>
<div class="c" style="left:706px;top:797px;width:94px;height:24px;background:#d2e4f5">۳۵۳,۰۸۲</div>
<div class="c" style="left:640px;top:797px;width:66px;height:24px;background:#fee2a0">۱,۸۲۹,۷۹۵</div>
<div class="c" style="left:576px;top:797px;width:64px;height:24px;background:#fee2a0">۱,۸۵۳,۶۴۴</div>
<div class="c" style="left:502px;top:797px;width:74px;height:24px;background:#fee2a0">۲,۲۲۷,۰۰۴</div>
<div class="c" style="left:406px;top:797px;width:96px;height:24px;background:#fee2a0">۴,۱۲۸,۰۷۳</div>
<div class="c" style="left:345px;top:797px;width:61px;height:24px;background:#d2e4f5">۱,۰۷۴,۸۵۱</div>
<div class="c" style="left:283px;top:797px;width:62px;height:24px;background:#d2e4f5">۱,۰۷۴,۲۲۹</div>
<div class="c" style="left:208px;top:797px;width:75px;height:24px;background:#fee2a0">۱,۱۴۸,۳۶۹</div>
<div class="c" style="left:111px;top:797px;width:97px;height:24px;background:#d2e4f5">۱,۲۳۳,۶۱۱</div>
<div class="c rt" style="left:35px;top:797px;width:76px;height:24px;background:#d2e4f5">تولید</div>
<div class="c rt" style="left:1805px;top:821px;width:80px;height:41px;background:#eeeeee;border-right:1px solid rgba(0,0,0,0.2)">کالاي خريداري<br>شده</div>
<div class="c rt" style="left:1761px;top:821px;width:44px;height:41px;background:#eeeeee">متر<br>مربع</div>
<div class="c" style="left:1699px;top:821px;width:62px;height:41px;background:#eeeeee">۳۳</div>
<div class="c" style="left:1634px;top:821px;width:65px;height:41px;background:#eeeeee">۳۳</div>
<div class="c" style="left:1558px;top:821px;width:76px;height:41px;background:#fee2a0">۱۲۱,۲۱۲</div>
<div class="c" style="left:1462px;top:821px;width:96px;height:41px;background:#eeeeee">۴</div>
<div class="c" style="left:1418px;top:821px;width:44px;height:41px;background:#eeeeee"><svg width="6" height="6" viewBox="0 0 6 6" style="display:inline-block;vertical-align:middle;margin-top:-2px"><circle cx="3" cy="3" r="2" fill="none" stroke="#1d5673" stroke-width="1.5"/></svg></div>
<div class="c" style="left:1369px;top:821px;width:49px;height:41px;background:#eeeeee"><svg width="6" height="6" viewBox="0 0 6 6" style="display:inline-block;vertical-align:middle;margin-top:-2px"><circle cx="3" cy="3" r="2" fill="none" stroke="#1d5673" stroke-width="1.5"/></svg></div>
<div class="c" style="left:1288px;top:821px;width:81px;height:41px;background:#eeeeee"><svg width="6" height="6" viewBox="0 0 6 6" style="display:inline-block;vertical-align:middle;margin-top:-2px"><circle cx="3" cy="3" r="2" fill="none" stroke="#1d5673" stroke-width="1.5"/></svg></div>
<div class="c" style="left:1226px;top:821px;width:62px;height:41px;background:#fee2a0">۳۳</div>
<div class="c" style="left:1161px;top:821px;width:65px;height:41px;background:#fee2a0">۳۳</div>
<div class="c" style="left:1085px;top:821px;width:76px;height:41px;background:#fee2a0">۱۲۱,۲۱۲</div>
<div class="c" style="left:990px;top:821px;width:95px;height:41px;background:#fee2a0">۴</div>
<div class="c" style="left:934px;top:821px;width:56px;height:41px;background:#eeeeee"></div>
<div class="c" style="left:875px;top:821px;width:59px;height:41px;background:#eeeeee"></div>
<div class="c" style="left:800px;top:821px;width:75px;height:41px;background:#fee2a0"><svg width="6" height="6" viewBox="0 0 6 6" style="display:inline-block;vertical-align:middle;margin-top:-2px"><circle cx="3" cy="3" r="2" fill="none" stroke="#1d5673" stroke-width="1.5"/></svg></div>
<div class="c" style="left:706px;top:821px;width:94px;height:41px;background:#eeeeee"><svg width="6" height="6" viewBox="0 0 6 6" style="display:inline-block;vertical-align:middle;margin-top:-2px"><circle cx="3" cy="3" r="2" fill="none" stroke="#1d5673" stroke-width="1.5"/></svg></div>
<div class="c" style="left:640px;top:821px;width:66px;height:41px;background:#fee2a0">۳۳</div>
<div class="c" style="left:576px;top:821px;width:64px;height:41px;background:#fee2a0">۳۳</div>
<div class="c" style="left:502px;top:821px;width:74px;height:41px;background:#fee2a0">۱۲۱,۲۱۲</div>
<div class="c" style="left:406px;top:821px;width:96px;height:41px;background:#fee2a0">۴</div>
<div class="c" style="left:345px;top:821px;width:61px;height:41px;background:#eeeeee"></div>
<div class="c" style="left:283px;top:821px;width:62px;height:41px;background:#eeeeee"></div>
<div class="c" style="left:208px;top:821px;width:75px;height:41px;background:#fee2a0"><svg width="6" height="6" viewBox="0 0 6 6" style="display:inline-block;vertical-align:middle;margin-top:-2px"><circle cx="3" cy="3" r="2" fill="none" stroke="#1d5673" stroke-width="1.5"/></svg></div>
<div class="c" style="left:111px;top:821px;width:97px;height:41px;background:#eeeeee"><svg width="6" height="6" viewBox="0 0 6 6" style="display:inline-block;vertical-align:middle;margin-top:-2px"><circle cx="3" cy="3" r="2" fill="none" stroke="#1d5673" stroke-width="1.5"/></svg></div>
<div class="c rt" style="left:35px;top:821px;width:76px;height:41px;background:#eeeeee">تولید</div>
<div class="c rt" style="left:1805px;top:862px;width:80px;height:41px;background:#fee2a0;border-right:1px solid rgba(0,0,0,0.2)">جمع فروش<br>صادراتی</div>
<div class="c rt" style="left:1761px;top:862px;width:44px;height:41px;background:#fee2a0"></div>
<div class="c" style="left:1699px;top:862px;width:62px;height:41px;background:#fee2a0">۲,۶۶۸,۲۱۸</div>
<div class="c" style="left:1634px;top:862px;width:65px;height:41px;background:#fee2a0">۲,۷۸۶,۷۳۳</div>
<div class="c" style="left:1558px;top:862px;width:76px;height:41px;background:#fee2a0"></div>
<div class="c" style="left:1462px;top:862px;width:96px;height:41px;background:#fee2a0">۶,۳۵۵,۷۵۰</div>
<div class="c" style="left:1418px;top:862px;width:44px;height:41px;background:#fee2a0"><svg width="6" height="6" viewBox="0 0 6 6" style="display:inline-block;vertical-align:middle;margin-top:-2px"><circle cx="3" cy="3" r="2" fill="none" stroke="#1d5673" stroke-width="1.5"/></svg></div>
<div class="c" style="left:1369px;top:862px;width:49px;height:41px;background:#fee2a0"><svg width="6" height="6" viewBox="0 0 6 6" style="display:inline-block;vertical-align:middle;margin-top:-2px"><circle cx="3" cy="3" r="2" fill="none" stroke="#1d5673" stroke-width="1.5"/></svg></div>
<div class="c" style="left:1288px;top:862px;width:81px;height:41px;background:#fee2a0"><svg width="6" height="6" viewBox="0 0 6 6" style="display:inline-block;vertical-align:middle;margin-top:-2px"><circle cx="3" cy="3" r="2" fill="none" stroke="#1d5673" stroke-width="1.5"/></svg></div>
<div class="c" style="left:1226px;top:862px;width:62px;height:41px;background:#fee2a0">۲,۶۶۸,۲۱۸</div>
<div class="c" style="left:1161px;top:862px;width:65px;height:41px;background:#fee2a0">۲,۷۸۶,۷۳۳</div>
<div class="c" style="left:1085px;top:862px;width:76px;height:41px;background:#fee2a0"></div>
<div class="c" style="left:990px;top:862px;width:95px;height:41px;background:#fee2a0">۶,۳۵۵,۷۵۰</div>
<div class="c" style="left:934px;top:862px;width:56px;height:41px;background:#fee2a0">۳۴۱,۲۰۰</div>
<div class="c" style="left:875px;top:862px;width:59px;height:41px;background:#fee2a0">۳۴۱,۲۰۰</div>
<div class="c" style="left:800px;top:862px;width:75px;height:41px;background:#fee2a0"></div>
<div class="c" style="left:706px;top:862px;width:94px;height:41px;background:#fee2a0">۸۲۹,۳۸۰</div>
<div class="c" style="left:640px;top:862px;width:66px;height:41px;background:#fee2a0">۳,۰۰۹,۴۱۸</div>
<div class="c" style="left:576px;top:862px;width:64px;height:41px;background:#fee2a0">۳,۱۲۷,۹۳۳</div>
<div class="c" style="left:502px;top:862px;width:74px;height:41px;background:#fee2a0"></div>
<div class="c" style="left:406px;top:862px;width:96px;height:41px;background:#fee2a0">۷,۱۸۵,۱۳۰</div>
<div class="c" style="left:345px;top:862px;width:61px;height:41px;background:#fee2a0">۲,۹۸۹,۴۱۲</div>
<div class="c" style="left:283px;top:862px;width:62px;height:41px;background:#fee2a0">۳,۰۰۰,۸۶۱</div>
<div class="c" style="left:208px;top:862px;width:75px;height:41px;background:#fee2a0"></div>
<div class="c" style="left:111px;top:862px;width:97px;height:41px;background:#fee2a0">۴,۱۹۰,۶۵۶</div>
<div class="c rt" style="left:35px;top:862px;width:76px;height:41px;background:#fee2a0"></div>
<div class="c rt b" style="left:1805px;top:903px;width:80px;height:42px;background:#d3d3d3;border-right:1px solid rgba(0,0,0,0.2)">درآمد ارائه<br>خدمات:</div>
<div class="c rt" style="left:1761px;top:903px;width:44px;height:42px;background:#d3d3d3"></div>
<div class="c" style="left:1699px;top:903px;width:62px;height:42px;background:#d3d3d3"></div>
<div class="c" style="left:1634px;top:903px;width:65px;height:42px;background:#d3d3d3"></div>
<div class="c" style="left:1558px;top:903px;width:76px;height:42px;background:#d3d3d3"></div>
<div class="c" style="left:1462px;top:903px;width:96px;height:42px;background:#d3d3d3"></div>
<div class="c" style="left:1418px;top:903px;width:44px;height:42px;background:#d3d3d3"></div>
<div class="c" style="left:1369px;top:903px;width:49px;height:42px;background:#d3d3d3"></div>
<div class="c" style="left:1288px;top:903px;width:81px;height:42px;background:#d3d3d3"></div>
<div class="c" style="left:1226px;top:903px;width:62px;height:42px;background:#d3d3d3"></div>
<div class="c" style="left:1161px;top:903px;width:65px;height:42px;background:#d3d3d3"></div>
<div class="c" style="left:1085px;top:903px;width:76px;height:42px;background:#d3d3d3"></div>
<div class="c" style="left:990px;top:903px;width:95px;height:42px;background:#d3d3d3"></div>
<div class="c" style="left:934px;top:903px;width:56px;height:42px;background:#d3d3d3"></div>
<div class="c" style="left:875px;top:903px;width:59px;height:42px;background:#d3d3d3"></div>
<div class="c" style="left:800px;top:903px;width:75px;height:42px;background:#d3d3d3"></div>
<div class="c" style="left:706px;top:903px;width:94px;height:42px;background:#d3d3d3"></div>
<div class="c" style="left:640px;top:903px;width:66px;height:42px;background:#d3d3d3"></div>
<div class="c" style="left:576px;top:903px;width:64px;height:42px;background:#d3d3d3"></div>
<div class="c" style="left:502px;top:903px;width:74px;height:42px;background:#d3d3d3"></div>
<div class="c" style="left:406px;top:903px;width:96px;height:42px;background:#d3d3d3"></div>
<div class="c" style="left:345px;top:903px;width:61px;height:42px;background:#d3d3d3"></div>
<div class="c" style="left:283px;top:903px;width:62px;height:42px;background:#d3d3d3"></div>
<div class="c" style="left:208px;top:903px;width:75px;height:42px;background:#d3d3d3"></div>
<div class="c" style="left:111px;top:903px;width:97px;height:42px;background:#d3d3d3"></div>
<div class="c rt" style="left:35px;top:903px;width:76px;height:42px;background:#d3d3d3"></div>
<div class="c rt" style="left:1805px;top:945px;width:80px;height:41px;background:#fee2a0;border-right:1px solid rgba(0,0,0,0.2)">جمع درآمد ارائه<br>خدمات</div>
<div class="c rt" style="left:1761px;top:945px;width:44px;height:41px;background:#fee2a0"></div>
<div class="c" style="left:1699px;top:945px;width:62px;height:41px;background:#fee2a0"><svg width="6" height="6" viewBox="0 0 6 6" style="display:inline-block;vertical-align:middle;margin-top:-2px"><circle cx="3" cy="3" r="2" fill="none" stroke="#1d5673" stroke-width="1.5"/></svg></div>
<div class="c" style="left:1634px;top:945px;width:65px;height:41px;background:#fee2a0"><svg width="6" height="6" viewBox="0 0 6 6" style="display:inline-block;vertical-align:middle;margin-top:-2px"><circle cx="3" cy="3" r="2" fill="none" stroke="#1d5673" stroke-width="1.5"/></svg></div>
<div class="c" style="left:1558px;top:945px;width:76px;height:41px;background:#fee2a0"></div>
<div class="c" style="left:1462px;top:945px;width:96px;height:41px;background:#fee2a0"><svg width="6" height="6" viewBox="0 0 6 6" style="display:inline-block;vertical-align:middle;margin-top:-2px"><circle cx="3" cy="3" r="2" fill="none" stroke="#1d5673" stroke-width="1.5"/></svg></div>
<div class="c" style="left:1418px;top:945px;width:44px;height:41px;background:#fee2a0"><svg width="6" height="6" viewBox="0 0 6 6" style="display:inline-block;vertical-align:middle;margin-top:-2px"><circle cx="3" cy="3" r="2" fill="none" stroke="#1d5673" stroke-width="1.5"/></svg></div>
<div class="c" style="left:1369px;top:945px;width:49px;height:41px;background:#fee2a0"><svg width="6" height="6" viewBox="0 0 6 6" style="display:inline-block;vertical-align:middle;margin-top:-2px"><circle cx="3" cy="3" r="2" fill="none" stroke="#1d5673" stroke-width="1.5"/></svg></div>
<div class="c" style="left:1288px;top:945px;width:81px;height:41px;background:#fee2a0"><svg width="6" height="6" viewBox="0 0 6 6" style="display:inline-block;vertical-align:middle;margin-top:-2px"><circle cx="3" cy="3" r="2" fill="none" stroke="#1d5673" stroke-width="1.5"/></svg></div>
<div class="c" style="left:1226px;top:945px;width:62px;height:41px;background:#fee2a0"><svg width="6" height="6" viewBox="0 0 6 6" style="display:inline-block;vertical-align:middle;margin-top:-2px"><circle cx="3" cy="3" r="2" fill="none" stroke="#1d5673" stroke-width="1.5"/></svg></div>
<div class="c" style="left:1161px;top:945px;width:65px;height:41px;background:#fee2a0"><svg width="6" height="6" viewBox="0 0 6 6" style="display:inline-block;vertical-align:middle;margin-top:-2px"><circle cx="3" cy="3" r="2" fill="none" stroke="#1d5673" stroke-width="1.5"/></svg></div>
<div class="c" style="left:1085px;top:945px;width:76px;height:41px;background:#fee2a0"></div>
<div class="c" style="left:990px;top:945px;width:95px;height:41px;background:#fee2a0"><svg width="6" height="6" viewBox="0 0 6 6" style="display:inline-block;vertical-align:middle;margin-top:-2px"><circle cx="3" cy="3" r="2" fill="none" stroke="#1d5673" stroke-width="1.5"/></svg></div>
<div class="c" style="left:934px;top:945px;width:56px;height:41px;background:#fee2a0"><svg width="6" height="6" viewBox="0 0 6 6" style="display:inline-block;vertical-align:middle;margin-top:-2px"><circle cx="3" cy="3" r="2" fill="none" stroke="#1d5673" stroke-width="1.5"/></svg></div>
<div class="c" style="left:875px;top:945px;width:59px;height:41px;background:#fee2a0"><svg width="6" height="6" viewBox="0 0 6 6" style="display:inline-block;vertical-align:middle;margin-top:-2px"><circle cx="3" cy="3" r="2" fill="none" stroke="#1d5673" stroke-width="1.5"/></svg></div>
<div class="c" style="left:800px;top:945px;width:75px;height:41px;background:#fee2a0"></div>
<div class="c" style="left:706px;top:945px;width:94px;height:41px;background:#fee2a0"><svg width="6" height="6" viewBox="0 0 6 6" style="display:inline-block;vertical-align:middle;margin-top:-2px"><circle cx="3" cy="3" r="2" fill="none" stroke="#1d5673" stroke-width="1.5"/></svg></div>
<div class="c" style="left:640px;top:945px;width:66px;height:41px;background:#fee2a0"><svg width="6" height="6" viewBox="0 0 6 6" style="display:inline-block;vertical-align:middle;margin-top:-2px"><circle cx="3" cy="3" r="2" fill="none" stroke="#1d5673" stroke-width="1.5"/></svg></div>
<div class="c" style="left:576px;top:945px;width:64px;height:41px;background:#fee2a0"><svg width="6" height="6" viewBox="0 0 6 6" style="display:inline-block;vertical-align:middle;margin-top:-2px"><circle cx="3" cy="3" r="2" fill="none" stroke="#1d5673" stroke-width="1.5"/></svg></div>
<div class="c" style="left:502px;top:945px;width:74px;height:41px;background:#fee2a0"></div>
<div class="c" style="left:406px;top:945px;width:96px;height:41px;background:#fee2a0"><svg width="6" height="6" viewBox="0 0 6 6" style="display:inline-block;vertical-align:middle;margin-top:-2px"><circle cx="3" cy="3" r="2" fill="none" stroke="#1d5673" stroke-width="1.5"/></svg></div>
<div class="c" style="left:345px;top:945px;width:61px;height:41px;background:#fee2a0"><svg width="6" height="6" viewBox="0 0 6 6" style="display:inline-block;vertical-align:middle;margin-top:-2px"><circle cx="3" cy="3" r="2" fill="none" stroke="#1d5673" stroke-width="1.5"/></svg></div>
<div class="c" style="left:283px;top:945px;width:62px;height:41px;background:#fee2a0"><svg width="6" height="6" viewBox="0 0 6 6" style="display:inline-block;vertical-align:middle;margin-top:-2px"><circle cx="3" cy="3" r="2" fill="none" stroke="#1d5673" stroke-width="1.5"/></svg></div>
<div class="c" style="left:208px;top:945px;width:75px;height:41px;background:#fee2a0"></div>
<div class="c" style="left:111px;top:945px;width:97px;height:41px;background:#fee2a0"><svg width="6" height="6" viewBox="0 0 6 6" style="display:inline-block;vertical-align:middle;margin-top:-2px"><circle cx="3" cy="3" r="2" fill="none" stroke="#1d5673" stroke-width="1.5"/></svg></div>
<div class="c rt" style="left:35px;top:945px;width:76px;height:41px;background:#fee2a0"></div>
<div class="c rt b" style="left:1805px;top:986px;width:80px;height:41px;background:#d3d3d3;border-right:1px solid rgba(0,0,0,0.2)">برگشت از<br>فروش:</div>
<div class="c rt" style="left:1761px;top:986px;width:44px;height:41px;background:#d3d3d3"></div>
<div class="c" style="left:1699px;top:986px;width:62px;height:41px;background:#d3d3d3"></div>
<div class="c" style="left:1634px;top:986px;width:65px;height:41px;background:#d3d3d3"></div>
<div class="c" style="left:1558px;top:986px;width:76px;height:41px;background:#d3d3d3"></div>
<div class="c" style="left:1462px;top:986px;width:96px;height:41px;background:#d3d3d3"></div>
<div class="c" style="left:1418px;top:986px;width:44px;height:41px;background:#d3d3d3"></div>
<div class="c" style="left:1369px;top:986px;width:49px;height:41px;background:#d3d3d3"></div>
<div class="c" style="left:1288px;top:986px;width:81px;height:41px;background:#d3d3d3"></div>
<div class="c" style="left:1226px;top:986px;width:62px;height:41px;background:#d3d3d3"></div>
<div class="c" style="left:1161px;top:986px;width:65px;height:41px;background:#d3d3d3"></div>
<div class="c" style="left:1085px;top:986px;width:76px;height:41px;background:#d3d3d3"></div>
<div class="c" style="left:990px;top:986px;width:95px;height:41px;background:#d3d3d3"></div>
<div class="c" style="left:934px;top:986px;width:56px;height:41px;background:#d3d3d3"></div>
<div class="c" style="left:875px;top:986px;width:59px;height:41px;background:#d3d3d3"></div>
<div class="c" style="left:800px;top:986px;width:75px;height:41px;background:#d3d3d3"></div>
<div class="c" style="left:706px;top:986px;width:94px;height:41px;background:#d3d3d3"></div>
<div class="c" style="left:640px;top:986px;width:66px;height:41px;background:#d3d3d3"></div>
<div class="c" style="left:576px;top:986px;width:64px;height:41px;background:#d3d3d3"></div>
<div class="c" style="left:502px;top:986px;width:74px;height:41px;background:#d3d3d3"></div>
<div class="c" style="left:406px;top:986px;width:96px;height:41px;background:#d3d3d3"></div>
<div class="c" style="left:345px;top:986px;width:61px;height:41px;background:#d3d3d3"></div>
<div class="c" style="left:283px;top:986px;width:62px;height:41px;background:#d3d3d3"></div>
<div class="c" style="left:208px;top:986px;width:75px;height:41px;background:#d3d3d3"></div>
<div class="c" style="left:111px;top:986px;width:97px;height:41px;background:#d3d3d3"></div>
<div class="c rt" style="left:35px;top:986px;width:76px;height:41px;background:#d3d3d3"></div>
<div class="c rt" style="left:1805px;top:1027px;width:80px;height:24px;background:#d2e4f5;border-right:1px solid rgba(0,0,0,0.2)">کاشي کف .</div>
<div class="c rt" style="left:1761px;top:1027px;width:44px;height:24px;background:#d2e4f5">مترمربع</div>
<div class="c" style="left:1699px;top:1027px;width:62px;height:24px;background:#d2e4f5"></div>
<div class="c red" style="left:1634px;top:1027px;width:65px;height:24px;background:#d2e4f5">(۲۲۰,۲۱۲)</div>
<div class="c" style="left:1558px;top:1027px;width:76px;height:24px;background:#fee2a0">۲,۵۶۸,۰۳۴</div>
<div class="c red" style="left:1462px;top:1027px;width:96px;height:24px;background:#d2e4f5">(۵۶۵,۵۱۲)</div>
<div class="c" style="left:1418px;top:1027px;width:44px;height:24px;background:#d2e4f5"></div>
<div class="c" style="left:1369px;top:1027px;width:49px;height:24px;background:#d2e4f5"><svg width="6" height="6" viewBox="0 0 6 6" style="display:inline-block;vertical-align:middle;margin-top:-2px"><circle cx="3" cy="3" r="2" fill="none" stroke="#1d5673" stroke-width="1.5"/></svg></div>
<div class="c" style="left:1288px;top:1027px;width:81px;height:24px;background:#d2e4f5"><svg width="6" height="6" viewBox="0 0 6 6" style="display:inline-block;vertical-align:middle;margin-top:-2px"><circle cx="3" cy="3" r="2" fill="none" stroke="#1d5673" stroke-width="1.5"/></svg></div>
<div class="c" style="left:1226px;top:1027px;width:62px;height:24px;background:#fee2a0"></div>
<div class="c red" style="left:1161px;top:1027px;width:65px;height:24px;background:#fee2a0">(۲۲۰,۲۱۲)</div>
<div class="c" style="left:1085px;top:1027px;width:76px;height:24px;background:#fee2a0">۲,۵۶۸,۰۳۴</div>
<div class="c red" style="left:990px;top:1027px;width:95px;height:24px;background:#fee2a0">(۵۶۵,۵۱۲)</div>
<div class="c" style="left:934px;top:1027px;width:56px;height:24px;background:#d2e4f5"></div>
<div class="c red" style="left:875px;top:1027px;width:59px;height:24px;background:#d2e4f5">(۱,۹۸۷)</div>
<div class="c" style="left:800px;top:1027px;width:75px;height:24px;background:#fee2a0">۲,۵۹۴,۳۶۳</div>
<div class="c red" style="left:706px;top:1027px;width:94px;height:24px;background:#d2e4f5">(۵,۱۵۵)</div>
<div class="c" style="left:640px;top:1027px;width:66px;height:24px;background:#fee2a0"></div>
<div class="c red" style="left:576px;top:1027px;width:64px;height:24px;background:#fee2a0">(۲۲۲,۱۹۹)</div>
<div class="c" style="left:502px;top:1027px;width:74px;height:24px;background:#fee2a0">۲,۵۶۸,۲۷۰</div>
<div class="c red" style="left:406px;top:1027px;width:96px;height:24px;background:#fee2a0">(۵۷۰,۶۶۷)</div>
<div class="c" style="left:345px;top:1027px;width:61px;height:24px;background:#d2e4f5"></div>
<div class="c red" style="left:283px;top:1027px;width:62px;height:24px;background:#d2e4f5">(۷۷,۷۴۹)</div>
<div class="c" style="left:208px;top:1027px;width:75px;height:24px;background:#fee2a0">۱,۱۷۲,۴۱۴</div>
<div class="c red" style="left:111px;top:1027px;width:97px;height:24px;background:#d2e4f5">(۹۱,۱۵۴)</div>
<div class="c rt" style="left:35px;top:1027px;width:76px;height:24px;background:#d2e4f5">تولید</div>
<div class="c rt" style="left:1805px;top:1051px;width:80px;height:41px;background:#eeeeee;border-right:1px solid rgba(0,0,0,0.2)">کاشي پرسلاني</div>
<div class="c rt" style="left:1761px;top:1051px;width:44px;height:41px;background:#eeeeee">متر<br>مربع</div>
<div class="c" style="left:1699px;top:1051px;width:62px;height:41px;background:#eeeeee"></div>
<div class="c red" style="left:1634px;top:1051px;width:65px;height:41px;background:#eeeeee">(۲۱۳,۶۰۷)</div>
<div class="c" style="left:1558px;top:1051px;width:76px;height:41px;background:#fee2a0">۳,۱۷۶,۲۹۶</div>
<div class="c red" style="left:1462px;top:1051px;width:96px;height:41px;background:#eeeeee">(۶۷۸,۴۷۹)</div>
<div class="c" style="left:1418px;top:1051px;width:44px;height:41px;background:#eeeeee"></div>
<div class="c red" style="left:1369px;top:1051px;width:49px;height:41px;background:#eeeeee">(۱۱۰)</div>
<div class="c red" style="left:1288px;top:1051px;width:81px;height:41px;background:#eeeeee">(۳۷۶)</div>
<div class="c" style="left:1226px;top:1051px;width:62px;height:41px;background:#fee2a0"></div>
<div class="c red" style="left:1161px;top:1051px;width:65px;height:41px;background:#fee2a0">(۲۱۳,۷۱۷)</div>
<div class="c" style="left:1085px;top:1051px;width:76px;height:41px;background:#fee2a0">۳,۱۷۶,۴۲۰</div>
<div class="c red" style="left:990px;top:1051px;width:95px;height:41px;background:#fee2a0">(۶۷۸,۸۵۵)</div>
<div class="c" style="left:934px;top:1051px;width:56px;height:41px;background:#eeeeee"></div>
<div class="c red" style="left:875px;top:1051px;width:59px;height:41px;background:#eeeeee">(۶۳,۶۹۰)</div>
<div class="c" style="left:800px;top:1051px;width:75px;height:41px;background:#fee2a0">۴,۱۸۸,۵۷۰</div>
<div class="c red" style="left:706px;top:1051px;width:94px;height:41px;background:#eeeeee">(۲۶۶,۷۷۰)</div>
<div class="c" style="left:640px;top:1051px;width:66px;height:41px;background:#fee2a0"></div>
<div class="c red" style="left:576px;top:1051px;width:64px;height:41px;background:#fee2a0">(۲۷۷,۴۰۷)</div>
<div class="c" style="left:502px;top:1051px;width:74px;height:41px;background:#fee2a0">۳,۴۰۸,۸۰۰</div>
<div class="c red" style="left:406px;top:1051px;width:96px;height:41px;background:#fee2a0">(۹۴۵,۶۲۵)</div>
<div class="c" style="left:345px;top:1051px;width:61px;height:41px;background:#eeeeee"></div>
<div class="c red" style="left:283px;top:1051px;width:62px;height:41px;background:#eeeeee">(۵۳۱,۵۴۲)</div>
<div class="c" style="left:208px;top:1051px;width:75px;height:41px;background:#fee2a0">۲,۳۱۷,۴۷۸</div>
<div class="c red" style="left:111px;top:1051px;width:97px;height:41px;background:#eeeeee">(۱,۲۳۱,۸۳۷)</div>
<div class="c rt" style="left:35px;top:1051px;width:76px;height:41px;background:#eeeeee">تولید</div>
<div class="a" style="left:1884px;top:370px;width:1px;height:65px;background:#9fd3ea"></div>
<div class="a" style="left:35px;top:370px;width:1px;height:65px;background:#9fd3ea"></div>
<svg class="a" style="left:0;top:0;pointer-events:none;direction:ltr" width="1920" height="1080"><g opacity="0.14"><text x="0 88 154.4 218 266 315 333.6 393 447.8 500.6 547 569.4" y="0" text-anchor="start" transform="translate(762 776) rotate(-45)" font-family="Liberation Sans" font-weight="normal" font-size="95" fill="#808080" stroke="#808080" stroke-width="2">@Codal360.ir</text></g></svg>
</body></html>
